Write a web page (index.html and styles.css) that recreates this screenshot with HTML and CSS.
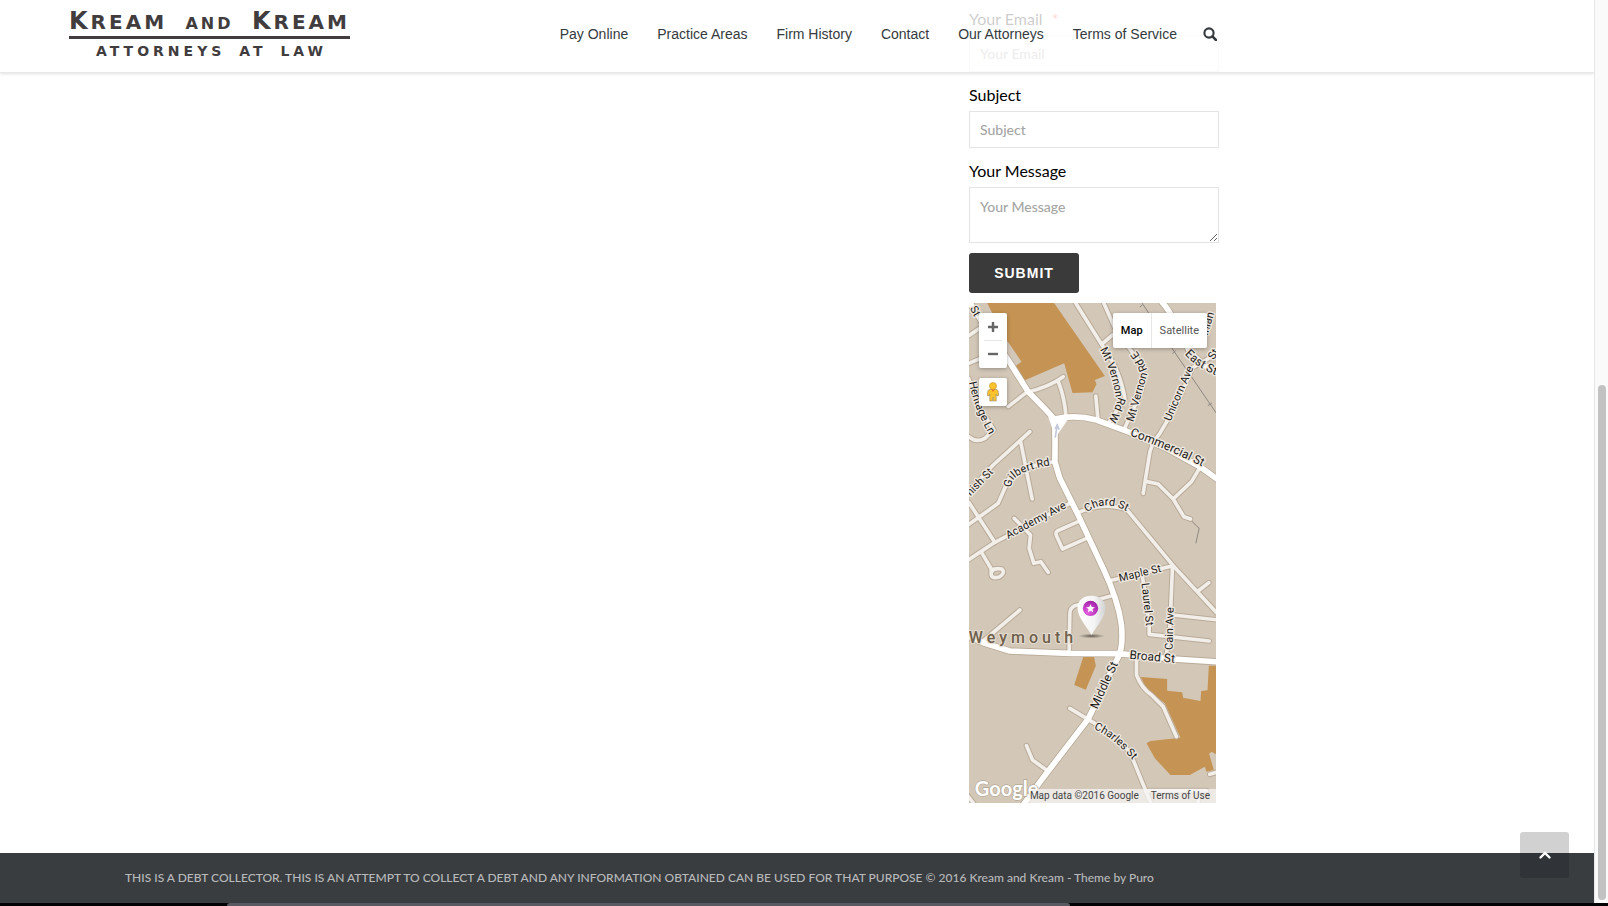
FILE: index.html
```html
<!DOCTYPE html>
<html lang="en">
<head>
<meta charset="utf-8">
<title>Kream and Kream, Attorneys at Law</title>
<link rel="stylesheet" href="styles.css">
</head>
<body>
<div class="window">
  <div class="page">
    <header class="site-header">
      <div class="header-inner">
        <a class="logo" href="#">
          <span class="logo-name"><span>K<small>REAM</small></span><span class="logo-and">AND</span><span>K<small>REAM</small></span></span>
          <span class="logo-tag"><span>ATTORNEYS</span><span>AT</span><span>LAW</span></span>
        </a>
        <nav class="main-nav">
          <a href="#">Pay Online</a>
          <a href="#">Practice Areas</a>
          <a href="#">Firm History</a>
          <a href="#">Contact</a>
          <a href="#">Our Attorneys</a>
          <a href="#">Terms of Service</a>
          <button class="search" type="button" aria-label="Search">
            <svg viewBox="0 0 14 14" width="14" height="14"><circle cx="6" cy="6" r="4.6" fill="none" stroke="#343a3d" stroke-width="2.1"/><path d="M9.4 9.4 13 13" stroke="#343a3d" stroke-width="2.5" stroke-linecap="round"/></svg>
          </button>
        </nav>
      </div>
    </header>

    <main class="content">
      <aside class="sidebar">
        <form class="contact-form">
          <div class="field">
            <label for="email">Your Email <span class="required">*</span></label>
            <input id="email" type="email" placeholder="Your Email">
          </div>
          <div class="field">
            <label for="subject">Subject</label>
            <input id="subject" type="text" placeholder="Subject">
          </div>
          <div class="field">
            <label for="message">Your Message</label>
            <textarea id="message" placeholder="Your Message"></textarea>
          </div>
          <button class="submit" type="submit">SUBMIT</button>
        </form>

        <div class="map">
          <svg class="map-canvas" viewBox="27 24 742 1500" preserveAspectRatio="xMidYMid slice">
            <defs>
              <g id="minor">
                <path d="M27 122 62 98M27 205 62 190"/>
                <path d="M345 20 425 148Q480 220 495 310L447 383M425 148 458 120"/>
                <path d="M430 20 470 110 520 175Q560 220 545 290L495 398"/>
                <path d="M310 245Q270 275 200 292L145 335M295 258Q315 310 318 362M408 303 414 370"/>
                <path d="M27 250Q45 320 80 370L102 405 75 430Q50 445 27 425"/>
                <path d="M210 410 100 510 22 596M182 438 217 612"/>
                <path d="M285 500Q200 510 150 545L115 625 22 692M27 622 105 742"/>
                <path d="M22 797 105 742 330 625M65 772 98 828"/>
                <path d="M94 826Q108 818 126 822 138 834 118 846 98 852 94 840Z"/>
                <path d="M163 670 212 720 208 760 222 805 243 800 265 832"/>
                <path d="M355 680 292 708Q286 714 290 722L308 762 380 730"/>
                <path d="M350 655Q430 618 502 645L640 812 775 958M715 888 747 863"/>
                <path d="M765 180 698 218 650 330 600 415Q570 450 567 490L550 595"/>
                <path d="M562 560 595 567 640 612 672 665 692 672M640 612 695 560 722 515"/>
                <path d="M455 856 640 812M548 845 568 990V1018L748 1038M638 815 630 1000 618 1092M640 960 775 975"/>
                <path d="M465 900 345 932Q330 940 330 955L328 1070M180 945 70 1038"/>
                <path d="M330 1240 400 1282Q470 1330 510 1370L575 1530M565 1487H740M200 1352 218 1395 260 1425"/>
                <path d="M530 1090V1140Q545 1180 575 1200L610 1235 650 1325M750 1438 775 1430M22 1500 45 1530"/>
                <path d="M712 1530 720 1500"/>
              </g>
              <g id="major">
                <path d="M22 10 60 70 145 195 205 290Q265 350 283 372 287 420 285 500L300 550 350 650 430 820Q475 915 485 990 490 1050 478 1080L385 1272 250 1448 190 1530"/>
                <path d="M283 372Q350 358 410 375L510 412 620 460 720 515 780 558"/>
                <path d="M600 14Q630 45 645 85L690 170Q730 215 780 238"/>
                <path d="M22 1022 75 1045 150 1068 330 1075 478 1076 640 1092 780 1101"/>
              </g>
              <path id="p-stw" d="M30 40 56 90"/>
              <path id="p-heritage" d="M28 262Q40 330 80 404L104 450"/>
              <path id="p-mtw" d="M420 164Q458 230 470 320"/>
              <path id="p-mtw2" d="M476 306Q468 335 448 372"/>
              <path id="p-mte" d="M520 382Q545 300 564 230"/>
              <path id="p-mte2" d="M562 224Q550 190 518 152"/>
              <path id="p-unicorn" d="M632 380 704 212"/>
              <path id="p-east" d="M674 178Q712 222 800 254"/>
              <path id="p-comm" d="M510 422Q620 460 745 524"/>
              <path id="p-inlan" d="M743 122 774 20"/>
              <path id="p-str" d="M762 196 792 146"/>
              <path id="p-nish" d="M32 604 114 520"/>
              <path id="p-gilbert" d="M156 578Q146 530 290 508"/>
              <path id="p-academy" d="M145 732 335 630"/>
              <path id="p-chard" d="M382 652Q440 607 515 658"/>
              <path id="p-maple" d="M480 860 630 824"/>
              <path id="p-laurel" d="M545 865 562 1020"/>
              <path id="p-cain" d="M638 1065 642 910"/>
              <path id="p-broad" d="M508 1091 670 1106"/>
              <path id="p-middle" d="M412 1244 484 1086"/>
              <path id="p-charles" d="M402 1302Q460 1325 526 1404"/>
            </defs>
            <rect x="20" y="20" width="760" height="1510" fill="#d3c8b8"/>
            <g fill="#c59454">
              <path d="M80 20H280L435 243 405 255 410 268 398 292 338 294 313 205 185 260 165 215 185 200 130 120Z"/>
              <path d="M372 1081 402 1083 408 1112 378 1184 343 1170Z"/>
              <path d="M543 1146 622 1152V1187L667 1192 670 1208 722 1218 724 1188 743 1186 747 1112H780V1385L755 1370 748 1376 762 1425 740 1430 735 1415 690 1440H632L585 1390 560 1345 572 1338 662 1328 615 1225 560 1182Z"/>
            </g>
            <g fill="none" stroke="#8d8880" stroke-width="3">
              <path d="M540 14 640 165 780 370M548 30l-8 6M638 176l10-10M688 248l10-10M744 332l12-8"/>
              <path d="M692 675 718 700 708 745"/>
            </g>
            <use href="#minor" class="casing casing-minor"/>
            <use href="#major" class="casing casing-major"/>
            <use href="#minor" class="road road-minor"/>
            <use href="#major" class="road road-major"/>
            <path d="M265 365 284 420 292 420 325 372Z" fill="#fff"/>
            <path d="M286 428 292 392M286 402 292 390 298 404" fill="none" stroke="#c4c8dc" stroke-width="5"/>
            <g class="street">
              <text><textPath href="#p-stw">St</textPath></text>
              <text><textPath href="#p-heritage">Heritage Ln</textPath></text>
              <text><textPath href="#p-mtw">Mt Vernon</textPath></text>
              <text><textPath href="#p-mtw2">Rd W</textPath></text>
              <text><textPath href="#p-mte">Mt Vernon</textPath></text>
              <text><textPath href="#p-mte2">Rd E</textPath></text>
              <text><textPath href="#p-unicorn">Unicorn Ave</textPath></text>
              <text><textPath href="#p-inlan">inlan</textPath></text>
              <text><textPath href="#p-str">St</textPath></text>
              <text><textPath href="#p-nish">nish St</textPath></text>
              <text><textPath href="#p-gilbert">Gilbert Rd</textPath></text>
              <text><textPath href="#p-academy">Academy Ave</textPath></text>
              <text><textPath href="#p-chard">Chard St</textPath></text>
              <text><textPath href="#p-maple">Maple St</textPath></text>
              <text><textPath href="#p-laurel">Laurel St</textPath></text>
              <text><textPath href="#p-cain">Cain Ave</textPath></text>
              <text><textPath href="#p-charles">Charles St</textPath></text>
            </g>
            <g class="street street-large">
              <text><textPath href="#p-east">East St</textPath></text>
              <text><textPath href="#p-comm">Commercial St</textPath></text>
              <text><textPath href="#p-broad">Broad St</textPath></text>
              <text><textPath href="#p-middle">Middle St</textPath></text>
            </g>
            <text class="town" x="27" y="1043">Weymouth</text>
            <radialGradient id="shade"><stop offset="0" stop-color="#4a443c" stop-opacity=".8"/><stop offset="1" stop-color="#4a443c" stop-opacity="0"/></radialGradient>
            <linearGradient id="pin" x1="0" x2="1"><stop offset="0" stop-color="#fff"/><stop offset=".6" stop-color="#f4f4f4"/><stop offset="1" stop-color="#d2d2d2"/></linearGradient>
            <radialGradient id="ball" cx=".35" cy=".75" r=".8"><stop offset="0" stop-color="#e85fe2"/><stop offset="1" stop-color="#9d1fa6"/></radialGradient>
            <ellipse cx="395" cy="1023" rx="40" ry="7" fill="url(#shade)"/>
            <path d="M395 1020C381 995 353 968 353 936A42 34 0 0 1 437 936C437 968 409 995 395 1020Z" fill="url(#pin)"/>
            <circle cx="392" cy="940" r="23" fill="url(#ball)"/>
            <path d="m392 928 4 8 9 1-7 6 2 9-8-5-8 5 2-9-7-6 9-1Z" fill="#fff"/>
            <text class="google" x="45" y="1503">Google</text>
          </svg>
          <div class="map-left">
            <div class="zoom">
              <button type="button" aria-label="Zoom in"><svg viewBox="0 0 10 10" width="10" height="10"><path d="M5 0v10M0 5h10" stroke="#666" stroke-width="2.4"/></svg></button>
              <button type="button" aria-label="Zoom out"><svg viewBox="0 0 10 10" width="10" height="10"><path d="M0 5h10" stroke="#666" stroke-width="2.4"/></svg></button>
            </div>
            <button class="pegman" type="button" aria-label="Street View">
              <svg viewBox="0 0 12 20" width="12" height="20"><path d="M3 7.500h6q2 0 2.200 2l.5 4-1.700.5-.8-2V19H6.500l-.5-4-.5 4H2.800v-7L2 14 .3 13.500l.5-4Q1 7.500 3 7.500Z" fill="#fcc42c" stroke="#a5936a" stroke-width=".7"/><circle cx="6" cy="4" r="3.500" fill="#fcc42c" stroke="#c99b3a" stroke-width=".7"/><path d="m4 7.500 2 2.500 2-2.500Z" fill="#ee7d22"/></svg>
            </button>
          </div>
          <div class="map-type">
            <button class="active" type="button">Map</button>
            <button type="button">Satellite</button>
          </div>
          <div class="attribution"><span>Map data ©2016 Google</span><a href="#">Terms of Use</a></div>
        </div>
      </aside>
    </main>

    <footer class="site-footer">
      <p>THIS IS A DEBT COLLECTOR. THIS IS AN ATTEMPT TO COLLECT A DEBT AND ANY INFORMATION OBTAINED CAN BE USED FOR THAT PURPOSE © 2016 Kream and Kream - Theme by <a href="#">Puro</a></p>
    </footer>
    <button class="to-top" type="button" aria-label="Back to top">
      <svg viewBox="0 0 12 8" width="12" height="8"><path d="M1.500 6.500 6 2l4.500 4.500" fill="none" stroke="#fff" stroke-width="2.400" stroke-linecap="round"/></svg>
    </button>
  </div>
  <div class="scrollbar"><div class="thumb"></div></div>
</div>
<div class="desktop-edge"><div class="dock"></div></div>
</body>
</html>
```
FILE: styles.css
```css
* { box-sizing: border-box; }
body {
  margin: 0;
  height: 100vh;
  display: flex;
  flex-direction: column;
  overflow: hidden;
  background: #fff;
  font-family: Lato, "Liberation Sans", sans-serif;
}
a { color: inherit; text-decoration: none; }
button { padding: 0; border: 0; background: none; font: inherit; color: inherit; cursor: pointer; }
svg { display: block; }

.window { flex: 1; min-height: 0; display: flex; }
.page { flex: 1; position: relative; display: flex; flex-direction: column; overflow: hidden; }

.site-header {
  position: absolute;
  inset: 0 0 auto 0;
  z-index: 2;
  background: rgba(255, 255, 255, 0.8);
  border-bottom: 1px solid #e8e8e8;
  box-shadow: 0 1px 3px rgba(0, 0, 0, 0.12);
}
.header-inner {
  max-width: 1217px;
  height: 72px;
  padding-left: 69px;
  display: flex;
  justify-content: space-between;
  align-items: flex-start;
}
.logo {
  width: 281px;
  padding-top: 9px;
  display: flex;
  flex-direction: column;
  font-family: "DejaVu Sans", sans-serif;
  font-weight: bold;
  color: #413c3d;
}
.logo-name {
  display: flex;
  justify-content: space-between;
  align-items: baseline;
  height: 30px;
  border-bottom: 3px solid #413c3d;
  font-size: 24px;
  line-height: 24px;
  letter-spacing: 3px;
}
.logo-name small { font-size: 20px; }
.logo-and { font-size: 16px; }
.logo-tag {
  display: flex;
  justify-content: space-between;
  padding: 3px 23px 0 27px;
  font-size: 14px;
  line-height: 18px;
  letter-spacing: 4px;
}
.main-nav {
  display: flex;
  gap: 29px;
  align-items: center;
  padding-top: 24px;
  font: 14px/20px "Liberation Sans", sans-serif;
  color: #343a3d;
}
.search { width: 14px; margin-left: -3px; }

.content { flex: 1; min-height: 0; padding-left: 125px; max-width: 1219px; width: 100%; display: flex; justify-content: flex-end; }
.sidebar { width: 250px; padding-top: 7px; }
.contact-form { margin-bottom: 10px; }
.field { display: flex; flex-direction: column; gap: 4px; margin-bottom: 11px; }
.field:last-of-type { margin-bottom: 10px; }
label { font-size: 16px; line-height: 24px; color: #000; }
.required { margin-left: 5px; color: #e33; }
input, textarea {
  width: 100%;
  height: 37px;
  padding: 0 10px;
  border: 1px solid #e4e4e4;
  border-radius: 0;
  background: #fff;
  font: 500 14px/20px Lato, sans-serif;
  color: #333;
}
textarea { height: 56px; padding: 9px 10px; resize: vertical; }
::placeholder { color: #a6a6a6; opacity: 1; }
.submit {
  display: block;
  width: 110px;
  height: 40px;
  border-radius: 3px;
  background: #3a3a3a;
  color: #fff;
  font: bold 14px/20px "Liberation Sans", sans-serif;
  letter-spacing: 1px;
}

.map { position: relative; max-width: 247px; height: 500px; overflow: hidden; font-family: Roboto, sans-serif; }
.map-canvas { width: 100%; height: 100%; }
.casing, .road { fill: none; stroke-linecap: round; stroke-linejoin: round; }
.casing { stroke: #b9aa97; }
.casing-minor { stroke-width: 17; }
.casing-major { stroke-width: 22; }
.road-minor { stroke: #f2eeea; stroke-width: 11; }
.road-major { stroke: #fff; stroke-width: 17; }
.street { font-size: 33px; fill: #1c1a18; stroke: #eee8e0; stroke-width: 8px; paint-order: stroke; stroke-linejoin: round; }
.street-large { font-size: 36px; }
.town { font-size: 48px; font-weight: 500; letter-spacing: 12px; fill: #6e604c; stroke: #e6ddd1; stroke-width: 6px; paint-order: stroke; }
.google { font-family: Lato, sans-serif; font-size: 60px; font-weight: bold; fill: #fff; stroke: #b3a797; stroke-width: 4px; paint-order: stroke; }

.map-left { position: absolute; left: 10px; top: 10px; display: flex; flex-direction: column; gap: 10px; }
.zoom, .pegman, .map-type { background: #fff; border-radius: 2px; box-shadow: 0 1px 4px rgba(0, 0, 0, 0.3); }
.zoom { width: 28px; }
.zoom button { width: 28px; height: 27px; display: grid; place-items: center; }
.zoom button + button { height: 28px; background: linear-gradient(#e6e6e6, #e6e6e6) center top / 18px 1px no-repeat; }
.pegman { width: 28px; height: 28px; display: grid; place-items: center; }
.map-type { position: absolute; right: 9px; top: 10px; display: flex; font-size: 11px; line-height: 35px; color: #565656; }
.map-type button { padding: 0 8px; }
.map-type .active { color: #000; font-weight: 500; border-right: 1px solid #e6e6e6; }
.attribution {
  position: absolute;
  right: 0;
  bottom: 0;
  display: flex;
  gap: 12px;
  padding: 0 6px 0 1px;
  background: rgba(245, 245, 245, 0.75);
  font-size: 10px;
  line-height: 14px;
  color: #444;
}

.site-footer { height: 50px; padding-left: 125px; background: #393d40; color: #b8b9ba; }
.site-footer p { margin: 0; font-size: 12px; line-height: 50px; font-weight: 500; white-space: nowrap; }
.to-top {
  position: absolute;
  right: 25px;
  bottom: 25px;
  width: 49px;
  height: 46px;
  display: grid;
  place-items: center;
  border-radius: 3px;
  background: rgba(10, 10, 15, 0.19);
}

.scrollbar { width: 14px; background: #fafafa; border-left: 1px solid #e6e6e6; padding: 385px 2px 3px 3px; }
.thumb { height: 100%; border-radius: 4px; background: #c2c2c2; }
.desktop-edge { height: 3px; background: #020204; }
.dock { width: 843px; height: 3px; margin-left: 227px; border-radius: 3px 3px 0 0; background: #595a61; }
```
